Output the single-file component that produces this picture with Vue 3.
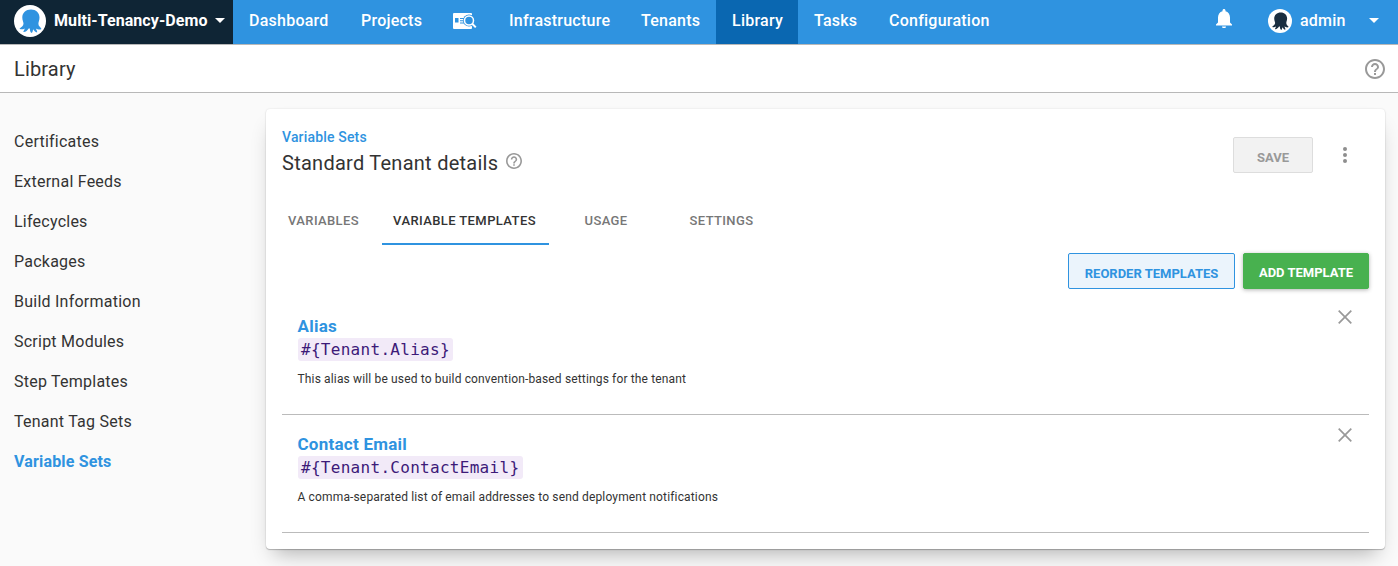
<script setup>
const navLeft = [
  { label: 'Dashboard', width: 112 },
  { label: 'Projects', width: 92 },
  { icon: true, width: 56 },
  { label: 'Infrastructure', width: 132 },
  { label: 'Tenants', width: 91 },
  { label: 'Library', width: 82, active: true },
  { label: 'Tasks', width: 75 },
  { label: 'Configuration', width: 132 },
]
const sidebar = [
  'Certificates', 'External Feeds', 'Lifecycles', 'Packages', 'Build Information',
  'Script Modules', 'Step Templates', 'Tenant Tag Sets', 'Variable Sets',
]
const tabs = [
  { label: 'Variables', cls: 'tab-variables' },
  { label: 'Variable Templates', cls: 'tab-templates' },
  { label: 'Usage', cls: 'tab-usage' },
  { label: 'Settings', cls: 'tab-settings' },
]
const templates = [
  { name: 'Alias', code: '#{Tenant.Alias}', help: 'This alias will be used to build convention-based settings for the tenant' },
  { name: 'Contact Email', code: '#{Tenant.ContactEmail}', help: 'A comma-separated list of email addresses to send deployment notifications' },
]
const octopus = 'M17 4.500C11.800 4.500 8.300 8 8.300 12.500c0 3 1.300 4.300 1.200 6.300-.1 2.400-2.200 3.400-4 4.900 1.600 1.200 3.700.6 5.200-.3-.1 1.500-1.500 2.400-1.300 3.600 2.400.2 4-1.700 5.300-3.600.6.1.8.1 1.200 0-.1 1.600.3 3.600 1.700 4.600 1.300-.7 1.200-2.400 1.500-3.700 1.100 1.400 2 3 4 3.300.4-1.600-.8-2.800-1.200-4.200 1.600.9 3.600 1.800 5.600.7-.4-1.900-3-2.600-3.100-5.200 0-2 1.100-3.400 1.100-6.400C25.500 8 22 4.500 17 4.500z'
const helpPath = 'M11 18h2v-2h-2v2zm1-16C6.480 2 2 6.480 2 12s4.480 10 10 10 10-4.480 10-10S17.520 2 12 2zm0 18c-4.410 0-8-3.590-8-8s3.590-8 8-8 8 3.590 8 8-3.590 8-8 8zm0-14c-2.210 0-4 1.790-4 4h2c0-1.100.9-2 2-2s2 .9 2 2c0 2-3 1.750-3 5h2c0-2.250 3-2.500 3-5 0-2.210-1.790-4-4-4z'
</script>

<template>
  <div class="page">
    <header class="topbar">
      <div class="space">
        <svg class="space-logo" viewBox="0 0 32 32"><circle cx="16" cy="16" r="16" fill="#fff" /><path :d="octopus" fill="#2f93e0" /></svg>
        <span class="space-name">Multi-Tenancy-Demo</span>
        <i class="caret"></i>
      </div>
      <nav class="nav">
        <a v-for="(n, i) in navLeft" :key="i" :class="['nav-item', { active: n.active }]" :style="{ width: n.width + 'px' }">
          <svg v-if="n.icon" class="nav-icon" viewBox="0 0 24 17">
            <rect x="0" y="0" width="19" height="16" rx="1" fill="#fff" />
            <path d="M2 5h3.500v4.500H2zM7 5h4v1H7zM7 7.200h4v1H7zM7 9.400h4v1H7z" fill="#2f93e0" />
            <circle cx="16" cy="7.500" r="6" fill="#2f93e0" />
            <path d="M18 10l5 5" stroke="#2f93e0" stroke-width="3.500" />
            <circle cx="16" cy="7.500" r="4.500" fill="#2f93e0" stroke="#fff" stroke-width="1.500" />
            <path d="M19.200 10.700l3.600 3.700" stroke="#fff" stroke-width="2" />
          </svg>
          <span v-else>{{ n.label }}</span>
        </a>
      </nav>
      <svg class="bell" viewBox="4 2.500 16 19.500"><path fill="#fff" d="M12 22c1.100 0 2-.9 2-2h-4c0 1.100.89 2 2 2zm6-6v-5c0-3.070-1.640-5.640-4.500-6.320V4c0-.83-.67-1.500-1.500-1.500s-1.500.67-1.500 1.500v.68C7.630 5.360 6 7.920 6 11v5l-2 2v1h16v-1l-2-2z" /></svg>
      <svg class="avatar" viewBox="0 0 32 32"><circle cx="16" cy="16" r="16" fill="#fff" /><path :d="octopus" fill="#1a2e40" /></svg>
      <span class="user">admin</span>
      <i class="caret user-caret"></i>
    </header>
    <div class="titlebar">
      <h1>Library</h1>
      <svg class="help-lg" viewBox="2 2 20 20"><path :d="helpPath" /></svg>
    </div>
    <div class="body">
      <aside class="sidebar">
        <a v-for="s in sidebar" :key="s" :class="{ current: s === 'Variable Sets' }"><span>{{ s }}</span></a>
      </aside>
      <main class="card">
        <div class="card-head">
          <div class="heading">
            <a class="crumb">Variable Sets</a>
            <div class="title-row">
              <h2>Standard Tenant details</h2>
              <svg class="help-sm" viewBox="2 2 20 20"><path :d="helpPath" /></svg>
            </div>
          </div>
          <button class="btn save"><span>SAVE</span></button>
          <svg class="more" viewBox="0 0 4 16"><circle cx="2" cy="2" r="2" /><circle cx="2" cy="8" r="2" /><circle cx="2" cy="14" r="2" /></svg>
        </div>
        <div class="tabs">
          <div v-for="t in tabs" :key="t.label" :class="['tab', t.cls]"><span>{{ t.label }}</span></div>
        </div>
        <div class="actions">
          <button class="btn reorder"><span>REORDER TEMPLATES</span></button>
          <button class="btn add"><span>ADD TEMPLATE</span></button>
        </div>
        <section v-for="t in templates" :key="t.name" class="template">
          <div class="info">
            <h3><span>{{ t.name }}</span></h3>
            <code>{{ t.code }}</code>
            <p><span>{{ t.help }}</span></p>
          </div>
          <svg class="close" viewBox="0 0 14 14"><path d="M.7.7l12.600 12.600M13.300.7L.7 13.300" /></svg>
        </section>
      </main>
    </div>
  </div>
</template>

<style>
body { margin: 0; background: #fafafa; }
</style>

<style scoped>
.page { height: 566px; overflow: hidden; display: flex; flex-direction: column; font-family: Roboto, "Liberation Sans", sans-serif; color: #333; letter-spacing: 0.24px; background: #fafafa; }
h1, h2, h3, p { margin: 0; font-weight: 400; }
.topbar { height: 44px; flex: none; box-sizing: border-box; background: #2f93e0; display: flex; color: #fff; font-size: 16px; font-weight: 500; line-height: 41px; }
.space { width: 233px; height: 44px; flex: none; background: #0f2535; display: flex; box-sizing: border-box; padding-left: 14px; }
.space-logo { width: 32px; height: 32px; margin-top: 5px; }
.space-name { width: 154px; margin-left: 8px; font-weight: 700; letter-spacing: .08px; white-space: nowrap; }
.caret { width: 0; height: 0; border: 5px solid transparent; border-top-color: #fff; border-bottom: 0; margin: 18px 0 0 7px; }
.nav { display: flex; flex: 1; }
.nav-item { height: 44px; flex: none; display: flex; box-sizing: border-box; padding-left: 16px; white-space: nowrap; }
.nav-item.active { background: #0a67b1; }
.nav-icon { width: 24px; height: 17px; margin-top: 13px; flex: none; }
.bell { width: 16px; height: 19.5px; margin-top: 8.5px; flex: none; }
.avatar { width: 24px; height: 24px; margin: 9px 0 0 36px; flex: none; }
.user { margin-left: 8px; width: 46px; }
.user-caret { margin: 18px 19px 0 23px; }
.titlebar { height: 49px; flex: none; box-sizing: border-box; border-top: 1px solid #b8b8b8; border-bottom: 1px solid #b8b8b8; background: #fff; display: flex; justify-content: space-between; align-items: center; padding: 0 13px 0 14px; }
h1 { font-size: 20px; line-height: 28px; letter-spacing: .15px; }
.help-lg { width: 20px; height: 20px; fill: #999; }
.body { flex: 1; display: flex; align-items: flex-start; padding-top: 16px; }
.sidebar { width: 266px; flex: none; padding-top: 13px; display: flex; flex-direction: column; }
.sidebar a { height: 40px; line-height: 40px; padding-left: 14px; font-size: 16px; }
.sidebar .current { color: #2f93e0; font-weight: 700; letter-spacing: .17px; }
.card { width: 1119px; height: 440px; box-sizing: border-box; background: #fff; border-radius: 4px; padding: 0 16px; box-shadow: 0 0 2px rgba(0,0,0,.12), 0 1px 1px rgba(0,0,0,.22), 0 12px 20px -8px rgba(0,0,0,.3); }
.card-head { display: flex; height: 87px; }
.heading { flex: 1; padding-top: 18px; }
.crumb { display: block; color: #2f93e0; font-size: 14px; font-weight: 500; line-height: 20px; letter-spacing: .17px; }
.title-row { display: flex; align-items: center; height: 32px; }
h2 { font-size: 20px; line-height: 32px; letter-spacing: .26px; }
.help-sm { width: 16px; height: 16px; fill: #999; margin: -5px 0 0 8px; }
.btn { font-family: inherit; box-sizing: border-box; height: 36px; border-radius: 2px; border: 1px solid; font-size: 13px; font-weight: 700; letter-spacing: 0; padding: 5px 0 0; text-align: center; white-space: nowrap; }
.save { width: 80px; margin-top: 28px; background: #f2f2f2; border-color: #ddd; color: #999; }
.more { width: 4px; height: 16px; margin: 38px 22px 0 30px; fill: #8e8e8e; }
.tabs { display: flex; height: 49px; }
.tab { box-sizing: border-box; line-height: 49px; font-size: 13px; font-weight: 500; text-transform: uppercase; text-align: center; color: #777; white-space: nowrap; letter-spacing: .36px; }
.tab-variables { width: 83px; margin-right: 17px; }
.tab-templates { width: 167px; padding-right: 2px; letter-spacing: .4px; color: #333; border-bottom: 2px solid #2f93e0; }
.tab-usage { width: 114px; }
.tab-settings { width: 117px; }
.actions { display: flex; justify-content: flex-end; gap: 8px; padding-top: 8px; height: 44px; box-sizing: border-box; }
.reorder { width: 167px; background: #ebf4fc; border-color: #2f93e0; color: #2f93e0; }
.add { width: 126px; background: #48b14f; border-color: #48b14f; color: #fff; padding-top: 3px; box-shadow: 0 1px 4px rgba(0,0,0,.3); }
.template { display: flex; box-sizing: border-box; height: 118px; padding: 18px 17px 0 15.5px; border-bottom: 1px solid #bbb; }
.actions + .template { margin-top: 8px; }
.info { flex: 1; }
h3 { color: #2f93e0; font-size: 17px; font-weight: 700; line-height: 23px; letter-spacing: .25px; }
code { display: block; width: max-content; font: 16px/23px "DejaVu Sans Mono", monospace; letter-spacing: .29px; color: #3d1a78; background: #f2eaf8; border-radius: 3px; padding: 0 3.5px; }
p { font-size: 12px; line-height: 20px; margin-top: 8px; letter-spacing: .15px; }
.close { width: 14px; height: 14px; margin-top: -5px; fill: none; stroke: #999; stroke-width: 1.7; }
</style>
